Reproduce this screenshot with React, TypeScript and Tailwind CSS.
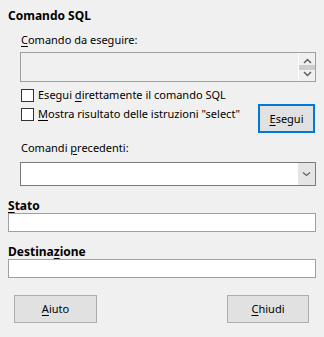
function Mn({ children }: { children: string }) {
  return <span className="underline underline-offset-[2px]">{children}</span>;
}

function Check({ children }: { children: React.ReactNode }) {
  return (
    <label className="flex h-[16px] items-center gap-[4px] whitespace-nowrap">
      <span className="ml-[1px] h-[13px] w-[13px] shrink-0 border border-[#333333] bg-white" />
      <span>{children}</span>
    </label>
  );
}

export default function App() {
  return (
    <div
      className="h-[337px] w-[324px] bg-[#f0f0f0] px-2 pt-[8px] text-[11px] leading-[16px] text-black"
      style={{ fontFamily: '"Noto Sans", "Liberation Sans", sans-serif' }}
    >
      <h1 className="text-[12px] font-bold">Comando SQL</h1>

      <section className="pl-[12px]">
        <p className="mt-[8px] pl-[1px]">
          <Mn>C</Mn>omando da eseguire:
        </p>

        <div className="mt-[4px] flex h-[30px] border border-[#a0a0a0] bg-[#f0f0f0]">
          <div className="flex-1" />
          <div className="flex w-[17px] flex-col items-center justify-center border-l border-white">
            <svg width="9" height="6" viewBox="0 0 9 6">
              <path d="M1 5 L4.5 1.5 L8 5" fill="none" stroke="#606060" strokeWidth="1.5" />
            </svg>
            <div className="my-[1px] h-[5px] w-full bg-[#cdcdcd]" />
            <svg width="9" height="6" viewBox="0 0 9 6">
              <path d="M1 1 L4.5 4.5 L8 1" fill="none" stroke="#606060" strokeWidth="1.5" />
            </svg>
          </div>
        </div>

        <div className="mt-[5px] flex items-start justify-between">
          <div className="flex flex-col gap-[3px]">
            <Check>
              Esegui <Mn>d</Mn>irettamente il comando SQL
            </Check>
            <Check>
              <Mn>M</Mn>ostra risultato delle istruzioni "select"
            </Check>
          </div>
          <button className="mr-[1px] mt-[17px] h-[29px] w-[57px] shrink-0 border-2 border-[#0078d7] bg-[#e1e1e1]">
            <Mn>E</Mn>segui
          </button>
        </div>

        <p className="mt-[7px] pl-[1px]">
          Comandi <Mn>p</Mn>recedenti:
        </p>

        <div className="mt-[6px] flex h-[24px] border border-[#7a7a7a] bg-white">
          <div className="flex-1" />
          <div className="flex w-[17px] items-center justify-center bg-[#e5e5e5]">
            <svg width="9" height="6" viewBox="0 0 9 6">
              <path d="M1 1.5 L4.5 4.5 L8 1.5" fill="none" stroke="#606060" strokeWidth="1.2" />
            </svg>
          </div>
        </div>
      </section>

      <p className="mt-[12px] text-[12px] font-bold leading-[15px]">
        <Mn>S</Mn>tato
      </p>
      <div className="h-[19px] border border-[#a0a0a0] bg-white" />

      <p className="mt-[12px] text-[12px] font-bold leading-[15px]">
        Destina<Mn>z</Mn>ione
      </p>
      <div className="h-[19px] border border-[#a0a0a0] bg-white" />

      <div className="mt-[17px] flex justify-between">
        <button className="ml-[6px] h-[28px] w-[83px] border border-[#adadad] bg-[#e1e1e1]">
          <Mn>A</Mn>iuto
        </button>
        <button className="mr-[7px] h-[28px] w-[82px] border border-[#adadad] bg-[#e1e1e1]">
          <Mn>C</Mn>hiudi
        </button>
      </div>
    </div>
  );
}
